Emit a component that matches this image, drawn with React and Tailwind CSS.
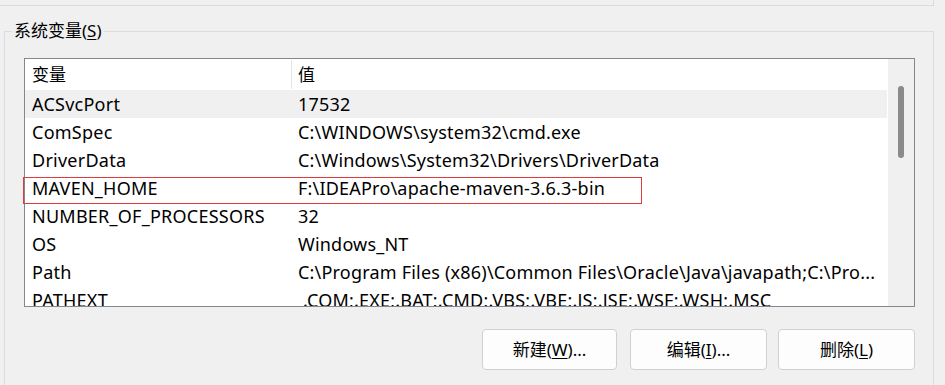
import React from 'react'

// System environment variables panel (Windows dialog fragment)
const rows = [
  ['ACSvcPort', '17532'],
  ['ComSpec', 'C:\\WINDOWS\\system32\\cmd.exe'],
  ['DriverData', 'C:\\Windows\\System32\\Drivers\\DriverData'],
  ['MAVEN_HOME', 'F:\\IDEAPro\\apache-maven-3.6.3-bin'],
  ['NUMBER_OF_PROCESSORS', '32'],
  ['OS', 'Windows_NT'],
  ['Path', 'C:\\Program Files (x86)\\Common Files\\Oracle\\Java\\javapath;C:\\Pro...'],
  ['PATHEXT', ' .COM;.EXE;.BAT;.CMD;.VBS;.VBE;.JS;.JSE;.WSF;.WSH;.MSC'],
]

function Btn({ label, keyChar, tail, w }) {
  return (
    <button className={`${w} h-[41px] rounded-[4px] border border-[#d0d0d0] bg-[#fdfdfd] text-[17px] text-black flex items-center justify-center`}>
      {label}(<span className="underline underline-offset-2">{keyChar}</span>){tail}
    </button>
  )
}

export default function App() {
  return (
    <div
      className="w-[945px] h-[385px] bg-[#f0f0f0] overflow-hidden relative text-black"
      style={{ fontFamily: '"Noto Sans", "Noto Sans CJK SC", sans-serif' }}
    >
      <div className="w-[934px] h-[6px] border-b border-r border-[#dcdcdc]" />

      <div className="relative ml-[4px] mt-[25px] w-[930px] h-[400px] border border-[#dcdcdc]">
        <span className="absolute left-[7px] top-[-12px] bg-[#f0f0f0] px-[2px] text-[17px] leading-[22px]">
          系统变量(<span className="underline underline-offset-2">S</span>)
        </span>

        <div className="ml-[19px] mt-[26px] w-[891px] h-[249px] border border-[#828790] bg-white flex">
          <div className="w-[862px] h-full overflow-hidden">
            <div className="flex h-[31px] items-center text-[17px]">
              <div className="w-[266px] pl-[7px]">变量</div>
              <div className="w-px h-[29px] self-start mt-px bg-[#e5e5e5]" />
              <div className="pl-[6px]">值</div>
            </div>
            {rows.map(([k, v], i) => (
              <div
                key={k}
                className={`flex h-[28px] items-center text-[18px] tracking-[0.25px] whitespace-pre ${i === 0 ? 'bg-[#f0f0f0]' : ''}`}
              >
                <div className="w-[266px] shrink-0 pl-[7px]">{k}</div>
                <div className="pl-[7px] tracking-[0.2px]">{v}</div>
              </div>
            ))}
          </div>
          <div className="w-[27px] h-full bg-[#f0f0f0] border-l border-white flex flex-col items-center pt-[27px]">
            <div className="w-[6px] h-[72px] rounded-full bg-[#8a8a8a]" />
          </div>
        </div>

        <div className="flex mt-[22px] ml-[477px]">
          <Btn label="新建" keyChar="W" tail="..." w="w-[135px]" />
          <div className="w-[13px]" />
          <Btn label="编辑" keyChar="I" tail="..." w="w-[137px]" />
          <div className="w-[11px]" />
          <Btn label="删除" keyChar="L" tail="" w="w-[137px]" />
        </div>
      </div>

      <div className="absolute left-[23px] top-[177px] w-[619px] h-[27px] border border-[#e23a3a]" />
    </div>
  )
}
